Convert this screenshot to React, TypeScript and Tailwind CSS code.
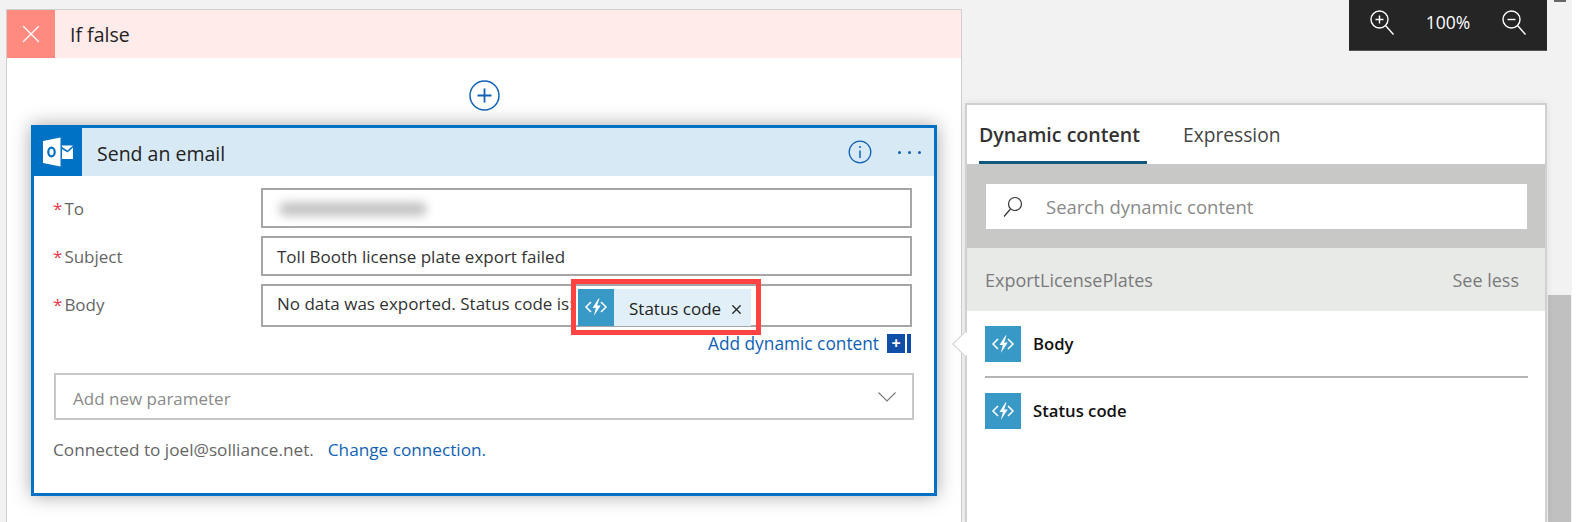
import React from 'react';
import { X } from 'lucide-react';

const font = { fontFamily: '"Open Sans", "Noto Sans", sans-serif' };

const FunctionIcon = ({ size = 24 }: { size?: number }) => (
    <svg width={size} height={size} viewBox="0 0 24 24" fill="none">
        <path d="M7 7 2 12l5 5M17 7l5 5-5 5" stroke="white" strokeWidth="1.5" />
        <path d="M14.5 3.5 8.5 13h3.4L9.8 21l6.9-10.5h-3.6l2.4-7z" fill="white" />
    </svg>
);

const OutlookIcon = () => (
    <svg width="32" height="32" viewBox="0 0 32 32">
        <path d="M1 5 18.5 1.5v29L1 27z" fill="white" />
        <path d="M20 9.5h11l-5.5 5-5.5-3.5z" fill="white" />
        <path d="M20 13l5.5 3.5L31 11.5V23H20z" fill="white" />
        <ellipse cx="9.5" cy="16" rx="3.2" ry="4.4" fill="none" stroke="#0072c6" strokeWidth="2.2" />
    </svg>
);

const Field = ({ label, children, tall }: { label: string; children: React.ReactNode; tall?: boolean }) => (
    <div className="flex items-center">
        <div className={`w-[208px] text-[17px] text-[#666] ${tall ? 'pb-[2px]' : 'pt-[1px]'}`}>
            <span className="text-[#e8394a] mr-[2px]">*</span>{label}
        </div>
        <div className={`relative w-[651px] border-2 border-[#a6a6a6] flex items-center pl-[14px] text-[17px] text-[#333] ${tall ? 'h-[43px] pb-[3px]' : 'h-[40px] pt-[1px]'}`}>
            {children}
        </div>
    </div>
);

export default function App() {
    return (
        <div style={font} className="w-[1576px] h-[522px] overflow-hidden bg-white flex">
            <div className="w-[1572px] h-full bg-[#f2f2f2] flex">
                {/* Left: condition branch */}
                <div className="ml-[6px] mt-[9px] w-[956px] h-[513px] shrink-0 bg-white border border-[#cfcfcf] border-b-0">
                    <div className="h-[48px] bg-[#ffebe9] flex items-center">
                        <div className="w-[48px] h-[48px] bg-[#ff8a80] flex items-center justify-center">
                            <X size={30} strokeWidth={1} className="text-white" />
                        </div>
                        <span className="ml-[15px] pt-[2px] text-[19.5px] text-[#222]">If false</span>
                    </div>
                    <div className="flex justify-center mt-[22px]">
                        <svg width="31" height="31" viewBox="0 0 31 31" fill="none" stroke="#0f62b5" strokeWidth="1.5">
                            <circle cx="15.5" cy="15.5" r="14.5" />
                            <path d="M15.5 8.5v14M8.5 15.5h14" strokeWidth="1.8" />
                        </svg>
                    </div>
                    {/* Email card */}
                    <div className="ml-[24px] mt-[14px] w-[906px] h-[371px] border-[3px] border-[#0072c6] bg-white shadow-[0_0_18px_rgba(0,0,0,0.35)]">
                        <div className="h-[48px] bg-[#d8e9f6] flex items-center">
                            <div className="w-[48px] h-[48px] bg-[#0072c6] flex items-center justify-center">
                                <OutlookIcon />
                            </div>
                            <span className="ml-[15px] pt-[3px] text-[19.5px] text-[#222]">Send an email</span>
                            <div className="ml-auto mr-[13px] flex items-center gap-[26px] text-[#0f62b5]">
                                <svg width="24" height="24" viewBox="0 0 24 24" fill="none" stroke="currentColor">
                                    <circle cx="12" cy="12" r="10.8" strokeWidth="1.3" />
                                    <path d="M12 10.5v7.5" strokeWidth="1.5" />
                                    <circle cx="12" cy="7" r="1" fill="currentColor" stroke="none" />
                                </svg>
                                <div className="flex gap-[7px] w-[23px]">
                                    <span className="w-[3px] h-[3px] rounded-full bg-current" />
                                    <span className="w-[3px] h-[3px] rounded-full bg-current" />
                                    <span className="w-[3px] h-[3px] rounded-full bg-current" />
                                </div>
                            </div>
                        </div>
                        <div className="pl-[19px] pt-[12px] flex flex-col gap-[8px]">
                            <Field label="To">
                                <div className="w-[148px] h-[14px] ml-[2px] bg-[#c4c4c4] rounded-full blur-[5px]" />
                            </Field>
                            <Field label="Subject">Toll Booth license plate export failed</Field>
                            <Field label="Body" tall>
                                <span className="whitespace-nowrap">No data was exported. Status code is:</span>
                                {/* Highlighted token */}
                                <div className="absolute left-[308px] top-[-7px] w-[190px] h-[56px] border-[5px] border-[#ff4343] flex items-center pl-[2px]">
                                    <div className="h-[37px] w-[173px] bg-[#e1eff8] flex items-center">
                                        <div className="w-[36px] h-[37px] bg-[#3999c6] flex items-center justify-center">
                                            <FunctionIcon />
                                        </div>
                                        <span className="ml-[15px] pt-[3px] text-[17px] text-[#222] whitespace-nowrap">Status code</span>
                                        <X size={15} strokeWidth={2} className="ml-[8px] mt-[4px] text-[#222]" />
                                    </div>
                                </div>
                            </Field>
                        </div>
                        <div className="mt-[3px] h-[27px] pr-[23px] flex justify-end items-center gap-[8px] text-[17.3px] text-[#0f62b5]">
                            <span>Add dynamic content</span>
                            <div className="flex w-[24px] h-[19px]">
                                <div className="w-[18px] bg-[#0f4fa8] text-white text-[16px] font-bold leading-[18px] text-center">+</div>
                                <div className="w-[4px] ml-[2px] bg-[#0f4fa8]" />
                            </div>
                        </div>
                        <div className="ml-[20px] mt-[16px] w-[860px] h-[47px] border-2 border-[#c8c8c8] flex items-center justify-between pl-[17px] pr-[16px] pt-[4px] text-[17px] text-[#8a8a8a]">
                            <span>Add new parameter</span>
                            <svg width="18" height="10" viewBox="0 0 18 10" fill="none" stroke="#777" strokeWidth="1.1" className="mb-[4px]">
                                <path d="M0.5 0.5 9 9l8.5-8.5" />
                            </svg>
                        </div>
                        <div className="ml-[19px] mt-[17px] text-[17.2px] text-[#666] flex gap-[14px]">
                            <span>Connected to joel@solliance.net.</span>
                            <span className="text-[#0f62b5]">Change connection.</span>
                        </div>
                    </div>
                </div>

                {/* Right: dynamic content panel */}
                <div className="ml-[3px] w-[582px] shrink-0 flex flex-col">
                    <div className="self-end w-[198px] h-[51px] bg-[#252525] text-white flex items-center justify-between pl-[21px] pr-[21px] pb-[6px] border-b border-[#555]">
                        <svg width="24" height="25" viewBox="0 0 24 25" fill="none" stroke="white" strokeWidth="1.4">
                            <circle cx="9.5" cy="9.5" r="8.5" />
                            <path d="M9.5 5.5v8M5.5 9.5h8" />
                            <path d="M15.5 15.5l8 9" />
                        </svg>
                        <span className="text-[17.5px]">100%</span>
                        <svg width="24" height="25" viewBox="0 0 24 25" fill="none" stroke="white" strokeWidth="1.4">
                            <circle cx="9.5" cy="9.5" r="8.5" />
                            <path d="M5.5 9.5h8" />
                            <path d="M15.5 15.5l8 9" />
                        </svg>
                    </div>
                    <div className="relative mt-[52px] flex-1 bg-white border-x-2 border-t-2 border-[#d0d0d0] shadow-[0_0_8px_rgba(0,0,0,0.08)]">
                        <div className="h-[59px] flex items-start pl-[12px]">
                            <div className="h-[59px] w-[168px] border-b-[3px] border-[#10587f] pt-[15px] text-[19.6px] leading-[30px] text-[#333] font-semibold whitespace-nowrap">
                                Dynamic content
                            </div>
                            <div className="ml-[36px] pt-[15px] text-[19.2px] leading-[30px] text-[#444]">Expression</div>
                        </div>
                        <div className="h-[84px] bg-[#c8c9c6] pl-[19px] pr-[18px] pt-[20px]">
                            <div className="h-[45px] bg-white flex items-center pl-[17px] text-[18.5px] text-[#8a8a8a]">
                                <svg width="20" height="22" viewBox="0 0 20 22" fill="none" stroke="#333" strokeWidth="1.2">
                                    <circle cx="12" cy="8" r="6.5" />
                                    <path d="M7.5 13 1 20.5" />
                                </svg>
                                <span className="ml-[23px]">Search dynamic content</span>
                            </div>
                        </div>
                        <div className="h-[63px] bg-[#e8eae8] flex items-center justify-between pl-[18px] pr-[26px] pt-[1px] text-[18px] text-[#7a7a7a]">
                            <span>ExportLicensePlates</span>
                            <span>See less</span>
                        </div>
                        <div className="ml-[18px] mt-[15px] flex flex-col">
                            <div className="flex items-center h-[36px]">
                                <div className="w-[36px] h-[36px] bg-[#3999c6] flex items-center justify-center"><FunctionIcon /></div>
                                <span className="ml-[12px] text-[16.7px] font-semibold text-[#111]">Body</span>
                            </div>
                            <div className="mt-[14px] h-[2px] bg-[#b5b5b5] w-[543px]" />
                            <div className="mt-[15px] flex items-center h-[36px]">
                                <div className="w-[36px] h-[36px] bg-[#3999c6] flex items-center justify-center"><FunctionIcon /></div>
                                <span className="ml-[12px] text-[16.7px] font-semibold text-[#111]">Status code</span>
                            </div>
                        </div>
                        {/* Callout arrow */}
                        <div className="absolute left-[-11px] top-[230px] w-[18px] h-[18px] bg-white rotate-45 border-l border-b border-[#d0d0d0]" />
                    </div>
                </div>

                {/* Scrollbar */}
                <div className="flex-1 flex flex-col pl-[1px] pr-[1px]">
                    <div className="mx-auto w-[12px] h-[2px] bg-[#666]" />
                    <div className="mt-[293px] flex-1 bg-[#c0c0c0]" />
                </div>
            </div>
        </div>
    );
}
